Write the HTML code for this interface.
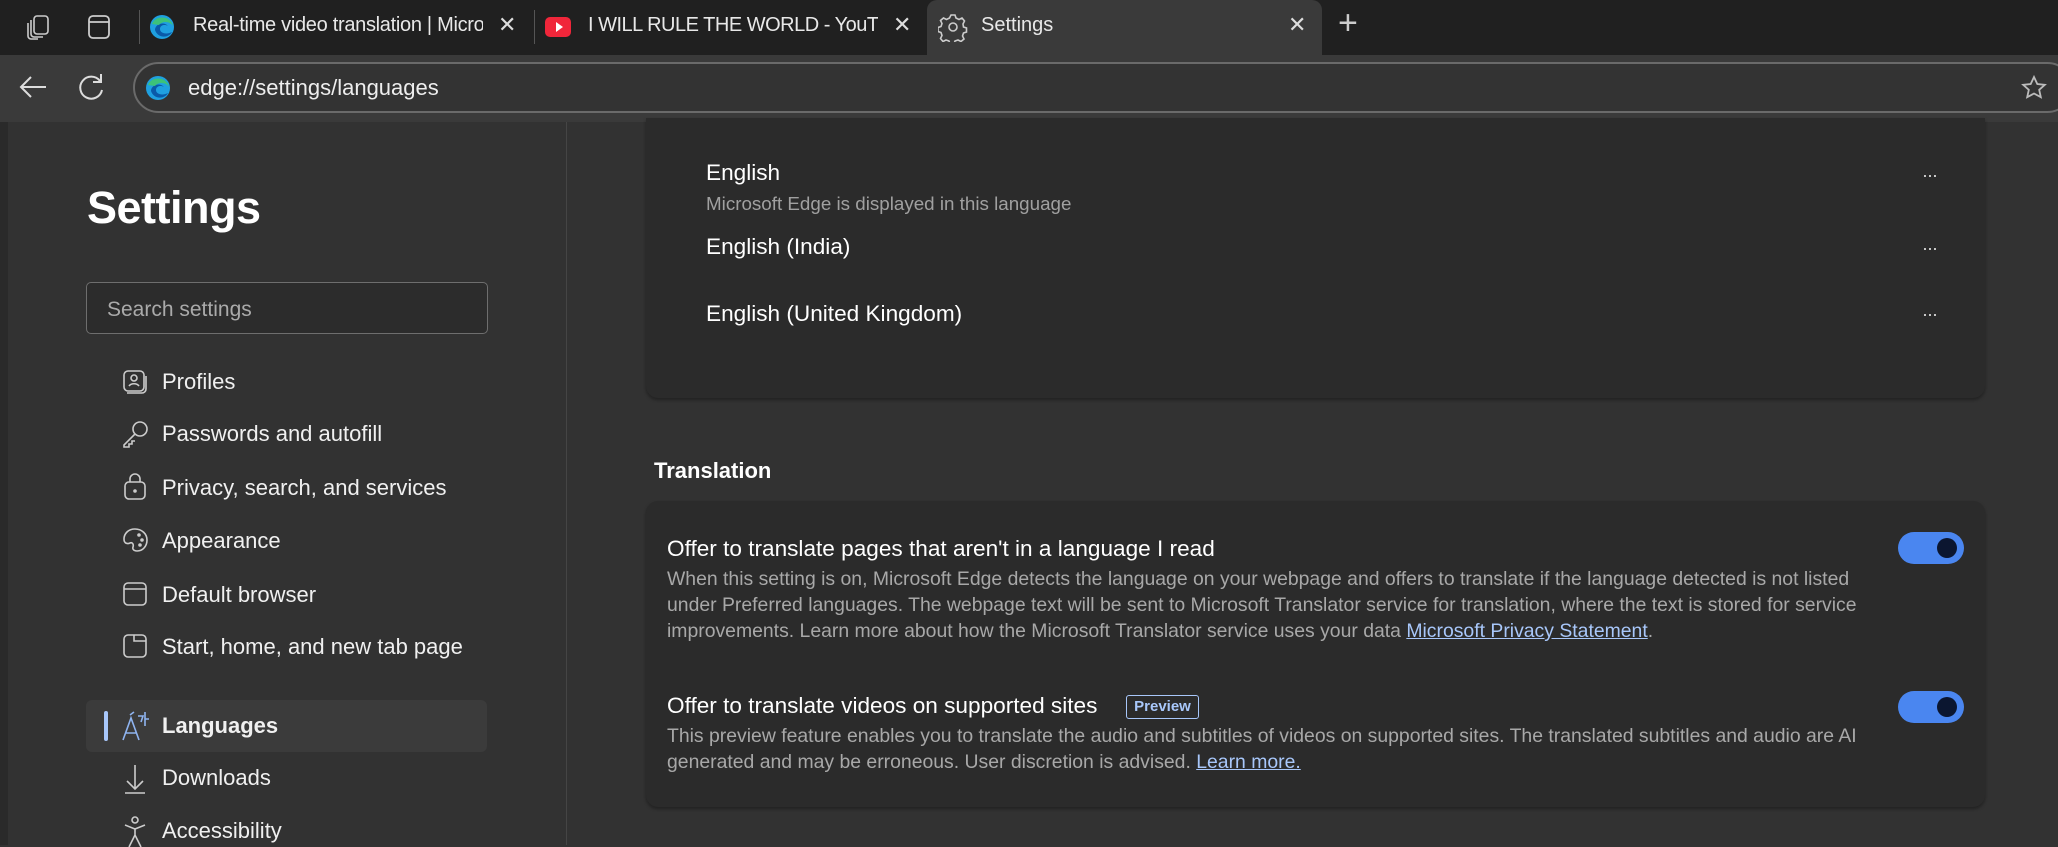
<!DOCTYPE html>
<html><head><meta charset="utf-8"><style>
*{margin:0;padding:0;box-sizing:border-box}
body{width:2058px;height:845px;overflow:hidden;background:#323232;font-family:"Liberation Sans",sans-serif;color:#fff;position:relative}
.abs{position:absolute}
.nw{white-space:nowrap}
.tabbar{left:0;top:0;width:2058px;height:55px;background:#202020}
.tab-active{left:927px;top:0;width:395px;height:55px;background:#3a3a3a;border-radius:10px 10px 0 0}
.toolbar{left:0;top:55px;width:2058px;height:67px;background:#3a3a3a}
.addr{left:133px;top:62px;width:1940px;height:51px;border:2px solid #6a6a6a;border-radius:26px;background:#333}
.side{left:8px;top:122px;width:559px;height:723px;background:#323232;border-right:1px solid #454545}
.strip{left:0;top:122px;width:8px;height:723px;background:#2a2a2a}
.navt{font-size:22px;color:#f0f0f0;left:162px}
.ic{left:121px}
.card{background:#2b2b2b;border-radius:12px;box-shadow:0 2px 3px rgba(0,0,0,.35)}
.desc{font-size:19.4px;color:#a8a8a8;line-height:26px;left:667px}
.toggle{width:66px;height:32px;border-radius:16px;background:#4a86f0;left:1898px}
.toggle:after{content:"";position:absolute;right:7px;top:6px;width:20px;height:20px;border-radius:50%;background:#0b1630}
a{color:#a8c7fa;text-decoration:underline}
.dots{left:1922px;font-size:18px;color:#ddd;letter-spacing:-1px}
.t1{font-size:22.6px}
</style></head><body>
<div class="abs tabbar"></div>
<div class="abs tab-active"></div>
<svg class="abs" style="left:24px;top:12px" width="30" height="30" viewBox="0 0 30 30" fill="none" stroke="#ccc" stroke-width="1.6"><rect x="10" y="4" width="14" height="18" rx="3"/><path d="M7 8v14a3 3 0 0 0 3 3h9"/><path d="M4 11v13a3 3 0 0 0 3 3h7"/></svg>
<svg class="abs" style="left:86px;top:13px" width="26" height="28" viewBox="0 0 26 28" fill="none" stroke="#ccc" stroke-width="1.8"><rect x="3" y="3" width="20" height="22" rx="4"/><path d="M3 9h20"/></svg>
<div class="abs" style="left:139px;top:10px;width:1px;height:34px;background:#555"></div>
<svg class="abs" style="left:149px;top:13px" width="26" height="28" viewBox="0 0 26 26"><circle cx="13" cy="13" r="12" fill="#1fa0e0"/><path d="M6 16c0-6 9-9 13-4-3-2-8-1-8 3 0 4 6 6 12 3-3 6-14 7-17-2z" fill="#0a5aa8"/><path d="M3 10C6 1 22 1 24 12c-2-4-10-6-14-1z" fill="#3cc27a"/></svg>
<div class="abs nw" style="left:193px;top:14px;font-size:20px;color:#e8e8e8;width:290px;overflow:hidden;letter-spacing:-0.3px">Real-time video translation | Micro</div>
<div class="abs" style="left:498px;top:12px;font-size:22px;color:#ddd">✕</div>
<div class="abs" style="left:534px;top:10px;width:1px;height:34px;background:#555"></div>
<div class="abs" style="left:545px;top:17px;width:26px;height:20px;background:#f0263a;border-radius:5px"></div>
<div class="abs" style="left:556px;top:22px;width:0;height:0;border-left:7px solid #fff;border-top:5px solid transparent;border-bottom:5px solid transparent"></div>
<div class="abs nw" style="left:588px;top:14px;font-size:20px;color:#e8e8e8;width:290px;overflow:hidden;letter-spacing:-0.5px">I WILL RULE THE WORLD - YouTub</div>
<div class="abs" style="left:893px;top:12px;font-size:22px;color:#ddd">✕</div>
<svg class="abs" style="left:938px;top:12px" width="30" height="30" viewBox="0 0 30 30" fill="none" stroke="#ccc" stroke-width="1.6"><circle cx="15" cy="15" r="4"/><path d="M13 3h4l1 3 3 1.5 3-1.5 2.5 3-1.5 3 .5 3 3 1v4l-3 1-1 3 1.5 3-3 2.5-3-1.5-3 1-1 3h-4l-1-3-3-1-3 1.5-2.5-3 1.5-3-1-3-3-1v-4l3-1 1-3-1.5-3 3-2.5 3 1.5 3-1.5z"/></svg>
<div class="abs nw" style="left:981px;top:14px;font-size:20px;color:#e8e8e8">Settings</div>
<div class="abs" style="left:1288px;top:12px;font-size:22px;color:#ddd">✕</div>
<div class="abs" style="left:1338px;top:4px;font-size:34px;color:#ccc;font-weight:300">+</div>
<div class="abs toolbar"></div>
<div class="abs addr"></div>
<svg class="abs" style="left:18px;top:74px" width="30" height="26" viewBox="0 0 30 26" fill="none" stroke="#ddd" stroke-width="2"><path d="M28 13H3M13 3 3 13l10 10"/></svg>
<svg class="abs" style="left:78px;top:72px" width="28" height="30" viewBox="0 0 28 30" fill="none" stroke="#ddd" stroke-width="2"><path d="M22 9a11 11 0 1 0 2 9"/><path d="M23 2v8h-8"/></svg>
<svg class="abs" style="left:145px;top:75px" width="26" height="26" viewBox="0 0 26 26"><circle cx="13" cy="13" r="12" fill="#1fa0e0"/><path d="M6 16c0-6 9-9 13-4-3-2-8-1-8 3 0 4 6 6 12 3-3 6-14 7-17-2z" fill="#0a5aa8"/><path d="M3 10C6 1 22 1 24 12c-2-4-10-6-14-1z" fill="#3cc27a"/></svg>
<div class="abs nw" style="left:188px;top:75px;font-size:22px;color:#eee">edge://settings/languages</div>
<svg class="abs" style="left:2020px;top:74px" width="28" height="28" viewBox="0 0 28 28" fill="none" stroke="#bbb" stroke-width="1.8"><path d="M14 3l3.3 7 7.5.8-5.6 5 1.6 7.4L14 19.5 7.2 23.2l1.6-7.4-5.6-5 7.5-.8z"/></svg>
<!-- sidebar -->
<div class="abs strip"></div>
<div class="abs side"></div>
<div class="abs nw" style="left:87px;top:182px;font-size:45px;font-weight:bold;color:#fff;letter-spacing:-0.5px">Settings</div>
<div class="abs" style="left:86px;top:282px;width:402px;height:52px;border:1.5px solid #6e6e6e;border-radius:5px;background:#2c2c2c"></div>
<div class="abs nw" style="left:107px;top:298px;font-size:21px;color:#aaa">Search settings</div>
<div class="abs" style="left:86px;top:700px;width:401px;height:52px;background:#3b3b3b;border-radius:6px"></div>
<div class="abs" style="left:104px;top:711px;width:4px;height:30px;background:#a8c7fa;border-radius:2px"></div>
<div class="abs navt nw" style="top:369px">Profiles</div>
<div class="abs navt nw" style="top:421px">Passwords and autofill</div>
<div class="abs navt nw" style="top:475px">Privacy, search, and services</div>
<div class="abs navt nw" style="top:528px">Appearance</div>
<div class="abs navt nw" style="top:582px">Default browser</div>
<div class="abs navt nw" style="top:634px">Start, home, and new tab page</div>
<div class="abs navt nw" style="top:713px;font-weight:bold">Languages</div>
<div class="abs navt nw" style="top:765px">Downloads</div>
<div class="abs navt nw" style="top:818px">Accessibility</div>
<svg class="abs ic" style="top:368px" width="30" height="30" viewBox="0 0 30 30" fill="none" stroke="#ccc" stroke-width="1.6"><rect x="3" y="3" width="20" height="20" rx="4"/><circle cx="13" cy="10" r="3"/><path d="M8 18c2-3 8-3 10 0M6 25h15a4 4 0 0 0 4-4V8"/></svg>
<svg class="abs ic" style="top:419px" width="30" height="30" viewBox="0 0 30 30" fill="none" stroke="#ccc" stroke-width="1.6"><circle cx="19" cy="10" r="7"/><path d="M14 15 3 26v2h5v-3h3v-3h3"/></svg>
<svg class="abs ic" style="top:472px" width="30" height="30" viewBox="0 0 30 30" fill="none" stroke="#ccc" stroke-width="1.6"><rect x="4" y="10" width="20" height="17" rx="4"/><path d="M9 10V7a5 5 0 0 1 10 0v3"/><circle cx="14" cy="19" r="1" fill="#ccc"/></svg>
<svg class="abs ic" style="top:526px" width="30" height="30" viewBox="0 0 30 30" fill="none" stroke="#ccc" stroke-width="1.6"><path d="M14 3C7 3 3 8 3 13s4 5 6 4 4 1 3 4 2 4 4 4c6 0 10-5 10-11S21 3 14 3z"/><circle cx="18" cy="9" r="1" fill="#ccc"/><circle cx="21" cy="14" r="1" fill="#ccc"/><circle cx="19" cy="19" r="1" fill="#ccc"/></svg>
<svg class="abs ic" style="top:580px" width="30" height="30" viewBox="0 0 30 30" fill="none" stroke="#ccc" stroke-width="1.6"><rect x="3" y="3" width="22" height="22" rx="4"/><path d="M3 9h22"/></svg>
<svg class="abs ic" style="top:632px" width="30" height="30" viewBox="0 0 30 30" fill="none" stroke="#ccc" stroke-width="1.6"><rect x="3" y="3" width="22" height="22" rx="4"/><path d="M13 3v6h12"/></svg>
<svg class="abs ic" style="top:710px" width="32" height="32" viewBox="0 0 32 32" fill="none" stroke="#8fb4f0" stroke-width="1.6"><path d="M2 30 10 8l8 22M5 23h10M9 5l4-3"/><path d="M17 6h5l-2 6M24 2v14M24 9h4"/></svg>
<svg class="abs ic" style="top:763px" width="30" height="32" viewBox="0 0 30 32" fill="none" stroke="#ccc" stroke-width="1.6"><path d="M14 2v24M6 18l8 8 8-8M4 30h20"/></svg>
<svg class="abs ic" style="top:815px" width="30" height="32" viewBox="0 0 30 32" fill="none" stroke="#ccc" stroke-width="1.6"><circle cx="14" cy="5" r="3"/><path d="M4 10l10 4 10-4M14 14v6l-6 12M14 20l6 12"/></svg>
<!-- content -->
<div class="abs card" style="left:646px;top:118px;width:1339px;height:280px;border-radius:0 0 12px 12px"></div>
<div class="abs nw t1" style="left:706px;top:160px">English</div>
<div class="abs nw" style="left:706px;top:193px;font-size:18.8px;color:#a0a0a0">Microsoft Edge is displayed in this language</div>
<div class="abs nw t1" style="left:706px;top:234px">English (India)</div>
<div class="abs nw t1" style="left:706px;top:301px">English (United Kingdom)</div>
<div class="abs dots" style="top:165px">···</div>
<div class="abs dots" style="top:238px">···</div>
<div class="abs dots" style="top:304px">···</div>
<div class="abs nw" style="left:654px;top:458px;font-size:22px;font-weight:bold">Translation</div>
<div class="abs card" style="left:646px;top:501px;width:1339px;height:306px"></div>
<div class="abs nw t1" style="left:667px;top:536px">Offer to translate pages that aren't in a language I read</div>
<div class="abs desc nw" style="top:566px">When this setting is on, Microsoft Edge detects the language on your webpage and offers to translate if the language detected is not listed<br>under Preferred languages. The webpage text will be sent to Microsoft Translator service for translation, where the text is stored for service<br>improvements. Learn more about how the Microsoft Translator service uses your data <a>Microsoft Privacy Statement</a>.</div>
<div class="abs toggle" style="top:532px"></div>
<div class="abs nw t1" style="left:667px;top:693px">Offer to translate videos on supported sites</div>
<div class="abs nw" style="left:1126px;top:695px;width:73px;height:24px;border:1.5px solid #a8c7fa;border-radius:3px;font-size:15px;color:#a8c7fa;text-align:center;line-height:21px;font-weight:bold">Preview</div>
<div class="abs desc nw" style="top:723px">This preview feature enables you to translate the audio and subtitles of videos on supported sites. The translated subtitles and audio are AI<br>generated and may be erroneous. User discretion is advised. <a>Learn more.</a></div>
<div class="abs toggle" style="top:691px"></div>
</body></html>
